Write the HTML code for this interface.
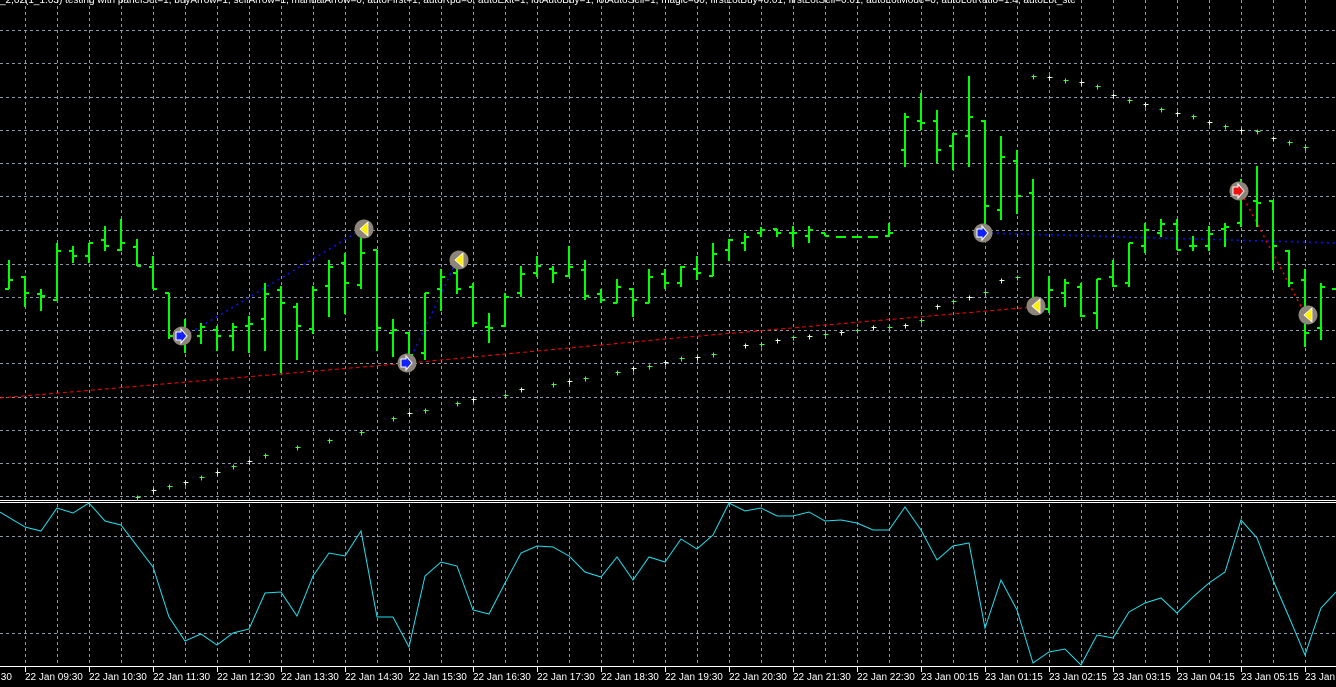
<!DOCTYPE html>
<html><head><meta charset="utf-8"><style>
html,body{margin:0;padding:0;background:#000;width:1336px;height:687px;overflow:hidden}
svg{display:block}
text{font-family:"Liberation Sans",sans-serif;font-size:10px;fill:#fff}
</style></head><body>
<svg width="1336" height="687" viewBox="0 0 1336 687" xmlns="http://www.w3.org/2000/svg">
<rect width="1336" height="687" fill="#000"/>
<g stroke="#8c97a6" stroke-width="1" stroke-dasharray="3,3" fill="none" shape-rendering="crispEdges">
<path d="M0 30.5H1336M0 63.5H1336M0 97.5H1336M0 130.5H1336M0 163.5H1336M0 196.5H1336M0 230.5H1336M0 264.5H1336M0 297.5H1336M0 330.5H1336M0 363.5H1336M0 397.5H1336M0 430.5H1336M0 463.5H1336M0 496.5H1336M0 536.5H1336M0 633.5H1336"/>
<path d="M25.5 0V666M57.5 0V666M89.5 0V666M121.5 0V666M153.5 0V666M185.5 0V666M217.5 0V666M249.5 0V666M281.5 0V666M313.5 0V666M345.5 0V666M377.5 0V666M409.5 0V666M441.5 0V666M473.5 0V666M505.5 0V666M537.5 0V666M569.5 0V666M601.5 0V666M633.5 0V666M665.5 0V666M697.5 0V666M729.5 0V666M761.5 0V666M793.5 0V666M825.5 0V666M857.5 0V666M889.5 0V666M921.5 0V666M953.5 0V666M985.5 0V666M1017.5 0V666M1049.5 0V666M1081.5 0V666M1113.5 0V666M1145.5 0V666M1177.5 0V666M1209.5 0V666M1241.5 0V666M1273.5 0V666M1305.5 0V666"/>
</g>
<g stroke="#fff" stroke-width="1" shape-rendering="crispEdges">
<path d="M0 500.5H1336M0 502.5H1336M0 666.5H1336"/>
<path d="M25.5 666V672M89.5 666V672M153.5 666V672M217.5 666V672M281.5 666V672M345.5 666V672M409.5 666V672M473.5 666V672M537.5 666V672M601.5 666V672M665.5 666V672M729.5 666V672M793.5 666V672M857.5 666V672M921.5 666V672M985.5 666V672M1049.5 666V672M1113.5 666V672M1177.5 666V672M1241.5 666V672M1305.5 666V672"/>
</g>
<text x="0" y="3">_2,02(1_1.03) testing with panelSet=1, buyArrow=1, sellArrow=1, manualArrow=0, autoFirst=1, autoRpd=0, autoExit=1, lotAutoBuy=1, lotAutoSell=1, magic=00, firstLotBuy=0.01, firstLotSell=0.01, autoLotMode=0, autoLotRatio=1.4, autoLot_ste</text>
<path d="M0 398L409 363L665 339L1033 307" stroke="#f00" stroke-width="1" stroke-dasharray="4,3" fill="none"/>
<path d="M1241 193L1305 314" stroke="#f00" stroke-width="1.5" stroke-dasharray="2,4" fill="none"/>
<g stroke="#1010ff" stroke-width="1.5" stroke-dasharray="2,4" fill="none">
<path d="M185 336L361 230"/><path d="M409 362L457 260"/><path d="M985 233L1336 243"/>
</g>
<path stroke="#00ff00" stroke-width="2.4" fill="none" shape-rendering="crispEdges" d="
M9 260V289M5 289H9M9 280H13
M25 277V307M21 277H25M25 293H29
M41 289V311M37 294H41M41 296H45
M57 243V300M53 300H57M57 251H61
M73 246V263M69 251H73M73 256H77
M89 243V263M85 256H89M89 243H93
M105 226V251M101 240H105M105 246H109
M121 219V251M117 250H121M121 243H125
M137 239V266M133 247H137M137 266H141
M153 256V289M149 267H153M153 289H157
M169 293V339M165 293H169M169 336H173
M185 319V353M181 336H185M185 334H189
M201 323V344M197 336H201M201 327H205
M217 326V351M213 330H217M217 336H221
M233 323V351M229 336H233M233 327H237
M249 316V353M245 326H249M249 324H253
M265 283V351M261 319H265M265 294H269
M281 286V373M277 290H281M281 303H285
M297 303V360M293 307H297M297 326H301
M313 286V334M309 329H313M313 290H317
M329 260V317M325 286H329M329 267H333
M345 253V314M341 263H345M345 283H349
M361 230V289M357 285H361M361 253H365
M377 250V351M373 250H377M377 328H381
M393 319V357M389 333H393M393 330H397
M409 333V367M405 333H409M409 355H413
M425 293V360M421 353H425M425 293H429
M441 269V311M437 289H441M441 277H445
M457 260V294M453 273H457M457 289H461
M473 283V327M469 287H473M473 323H477
M489 313V343M485 327H489M489 328H493
M505 293V327M501 326H505M505 297H509
M521 266V297M517 293H521M521 274H525
M537 256V277M533 273H537M537 266H541
M553 266V283M549 269H553M553 273H557
M569 246V277M565 276H569M569 267H573
M585 260V300M581 270H585M585 296H589
M601 289V303M597 294H601M601 300H605
M617 279V303M613 303H617M617 287H621
M633 289V317M629 289H633M633 300H637
M649 269V303M645 303H649M649 277H653
M665 269V289M661 274H665M665 283H669
M681 266V287M677 283H681M681 267H685
M697 256V280M693 269H697M697 273H701
M713 243V276M709 276H713M713 254H717
M729 239V261M725 250H729M729 240H733
M745 233V251M741 243H745M745 237H749
M761 227V237M757 233H761M761 230H765
M777 229V237M773 229H777M777 233H781
M793 226V247M789 233H793M793 233H797
M809 226V243M805 236H809M809 230H813
M825 233V236M821 233H825M825 236H829
M836 237H846M852 237H862M868 237H878
M889 223V236M885 236H889M889 233H893
M905 113V167M901 150H905M905 117H909
M921 93V130M917 121H921M921 123H925
M937 110V163M933 121H937M937 150H941
M953 133V170M949 146H953M953 134H957
M969 76V167M965 136H969M969 117H973
M985 121V233M981 121H985M985 206H989
M1001 136V220M997 210H1001M1001 157H1005
M1017 150V214M1013 161H1017M1017 196H1021
M1033 179V310M1029 193H1033M1033 309H1037
M1049 276V313M1045 309H1049M1049 290H1053
M1065 279V307M1061 293H1065M1065 283H1069
M1081 283V317M1077 287H1081M1081 316H1085
M1097 279V329M1093 313H1097M1097 279H1101
M1113 260V287M1109 277H1113M1113 286H1117
M1129 243V287M1125 283H1129M1129 243H1133
M1145 223V253M1141 246H1145M1145 230H1149
M1161 219V237M1157 233H1161M1161 224H1165
M1177 219V250M1173 224H1177M1177 250H1181
M1193 236V251M1189 246H1193M1193 246H1197
M1209 226V251M1205 246H1209M1209 234H1213
M1225 223V247M1221 229H1225M1225 227H1229
M1241 179V227M1237 223H1241M1241 197H1245
M1257 166V227M1253 201H1257M1257 203H1261
M1273 200V270M1269 201H1273M1273 246H1277
M1289 250V287M1285 251H1289M1289 283H1293
M1305 269V347M1301 280H1305M1305 333H1309
M1321 283V340M1317 328H1321M1321 287H1325
M1332 289H1336"/>
<g stroke-width="1" fill="none" shape-rendering="crispEdges" transform="translate(0.5,0.5)">
<path stroke="#40ff40" d="M135 497h5M137 495v5M167 486h5M169 484v5M199 477h5M201 475v5M231 466h5M233 464v5M263 455h5M265 453v5M295 447h5M297 445v5M327 440h5M329 438v5M359 432h5M361 430v5M391 418h5M393 416v5M423 410h5M425 408v5M455 403h5M457 401v5M503 395h5M505 393v5M551 384h5M553 382v5M583 378h5M585 376v5M615 372h5M617 370v5M647 366h5M649 364v5M679 358h5M681 356v5M711 354h5M713 352v5M759 344h5M761 342v5M791 337h5M793 335v5M823 334h5M825 332v5M855 330h5M857 328v5M887 327h5M889 325v5M919 320h5M921 318v5M951 301h5M953 299v5M983 292h5M985 290v5M1015 277h5M1017 275v5M1031 76h5M1033 74v5M1063 80h5M1065 78v5M1095 86h5M1097 84v5M1127 100h5M1129 98v5M1159 109h5M1161 107v5M1191 116h5M1193 114v5M1223 126h5M1225 124v5M1255 131h5M1257 129v5M1287 142h5M1289 140v5M1303 147h5M1305 145v5"/>
<path stroke="#d8ffd8" d="M151 490h5M153 488v5M183 482h5M185 480v5M215 472h5M217 470v5M247 461h5M249 459v5M407 413h5M409 411v5M471 399h5M473 397v5M519 389h5M521 387v5M567 381h5M569 379v5M631 368h5M633 366v5M663 362h5M665 360v5M695 357h5M697 355v5M743 345h5M745 343v5M775 340h5M777 338v5M807 336h5M809 334v5M839 332h5M841 330v5M871 327h5M873 325v5M903 325h5M905 323v5M935 306h5M937 304v5M967 297h5M969 295v5M999 280h5M1001 278v5M1047 77h5M1049 75v5M1079 82h5M1081 80v5M1111 95h5M1113 93v5M1143 104h5M1145 102v5M1175 113h5M1177 111v5M1207 122h5M1209 120v5M1239 130h5M1241 128v5M1271 138h5M1273 136v5"/>
</g>
<g>
<circle cx="182" cy="336" r="9.5" fill="#8e857a"/><path d="M176 332h5v-3l6 7-6 7v-3h-5z" fill="#1020ff" stroke="#fff" stroke-width="1"/>
<circle cx="407" cy="363" r="9.5" fill="#8e857a"/><path d="M401 359h5v-3l6 7-6 7v-3h-5z" fill="#1020ff" stroke="#fff" stroke-width="1"/>
<circle cx="983" cy="233" r="9.5" fill="#8e857a"/><path d="M977 229h5v-3l6 7-6 7v-3h-5z" fill="#1020ff" stroke="#fff" stroke-width="1"/>
<circle cx="1239" cy="191" r="9.5" fill="#8e857a"/><path d="M1233 187h5v-3l6 7-6 7v-3h-5z" fill="#f01010" stroke="#fff" stroke-width="1"/>
<circle cx="364" cy="229" r="9.5" fill="#8e857a"/><path d="M368 222v14l-8-7z" fill="#ffee00" stroke="#fff" stroke-width="0.8"/>
<circle cx="459" cy="260" r="9.5" fill="#8e857a"/><path d="M463 253v14l-8-7z" fill="#ffee00" stroke="#fff" stroke-width="0.8"/>
<circle cx="1036" cy="306" r="9.5" fill="#8e857a"/><path d="M1040 299v14l-8-7z" fill="#ffee00" stroke="#fff" stroke-width="0.8"/>
<circle cx="1308" cy="315" r="9.5" fill="#8e857a"/><path d="M1312 308v14l-8-7z" fill="#ffee00" stroke="#fff" stroke-width="0.8"/>
</g>
<polyline fill="none" stroke="#20e0f0" stroke-width="1" points="0,512 25,527 41,531 57,508 73,513 89,503 105,521 121,525 153,567 169,617 185,641 201,634 217,645 233,633 249,629 265,593 281,592 297,616 313,576 329,553 345,556 361,531 377,617 393,617 409,647 425,576 441,562 457,566 473,610 489,614 505,583 521,553 537,546 553,547 569,556 585,572 601,577 617,557 633,580 649,557 665,562 681,539 697,549 713,535 729,503 745,511 761,508 777,516 793,516 809,512 825,521 841,520 857,523 873,530 889,530 905,507 921,530 937,560 953,546 969,543 985,628 1001,580 1017,610 1033,663 1049,652 1065,649 1081,665 1097,635 1113,638 1129,612 1145,603 1161,598 1177,613 1193,597 1209,583 1225,572 1241,520 1257,538 1273,580 1289,617 1305,655 1321,608 1336,592"/>
<g>
<text x="-2" y="680">:30</text>
<text x="25" y="680">22 Jan 09:30</text>
<text x="89" y="680">22 Jan 10:30</text>
<text x="153" y="680">22 Jan 11:30</text>
<text x="217" y="680">22 Jan 12:30</text>
<text x="281" y="680">22 Jan 13:30</text>
<text x="345" y="680">22 Jan 14:30</text>
<text x="409" y="680">22 Jan 15:30</text>
<text x="473" y="680">22 Jan 16:30</text>
<text x="537" y="680">22 Jan 17:30</text>
<text x="601" y="680">22 Jan 18:30</text>
<text x="665" y="680">22 Jan 19:30</text>
<text x="729" y="680">22 Jan 20:30</text>
<text x="793" y="680">22 Jan 21:30</text>
<text x="857" y="680">22 Jan 22:30</text>
<text x="921" y="680">23 Jan 00:15</text>
<text x="985" y="680">23 Jan 01:15</text>
<text x="1049" y="680">23 Jan 02:15</text>
<text x="1113" y="680">23 Jan 03:15</text>
<text x="1177" y="680">23 Jan 04:15</text>
<text x="1241" y="680">23 Jan 05:15</text>
<text x="1305" y="680">23 Jan 06</text>
</g>
</svg>
</body></html>
